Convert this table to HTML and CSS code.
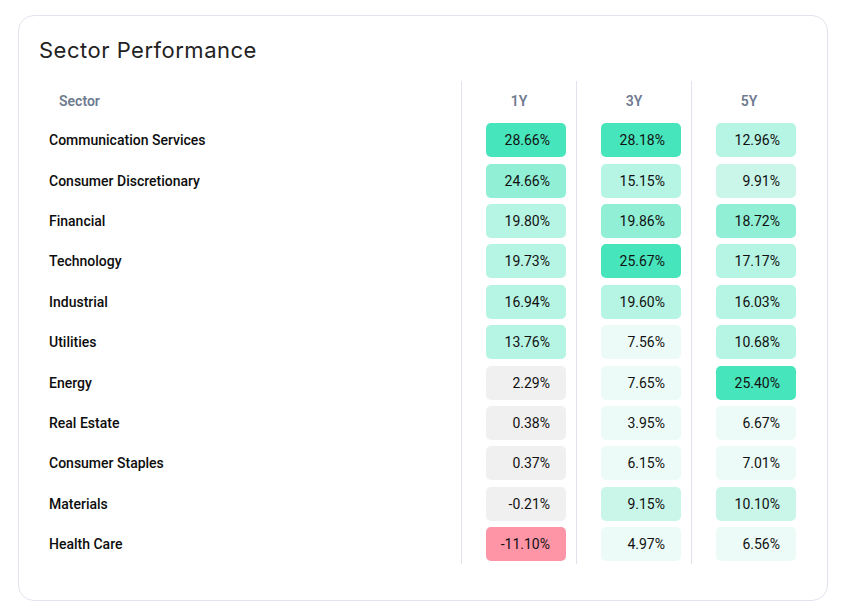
FILE: index.html
```html
<!DOCTYPE html>
<html lang="en">
<head>
<meta charset="utf-8">
<title>Sector Performance</title>
<link rel="stylesheet" href="styles.css">
</head>
<body>
<section class="card">
  <h2 class="title">Sector Performance</h2>
  <div class="grid">
    <div class="th th-sector">Sector</div>
    <div class="th num-col">1Y</div>
    <div class="th num-col">3Y</div>
    <div class="th num-col">5Y</div>

    <div class="name">Communication Services</div>
    <div class="num-col"><span class="pill a">28.66%</span></div>
    <div class="num-col"><span class="pill a">28.18%</span></div>
    <div class="num-col"><span class="pill c">12.96%</span></div>

    <div class="name">Consumer Discretionary</div>
    <div class="num-col"><span class="pill b">24.66%</span></div>
    <div class="num-col"><span class="pill c">15.15%</span></div>
    <div class="num-col"><span class="pill d">9.91%</span></div>

    <div class="name">Financial</div>
    <div class="num-col"><span class="pill c">19.80%</span></div>
    <div class="num-col"><span class="pill b">19.86%</span></div>
    <div class="num-col"><span class="pill b">18.72%</span></div>

    <div class="name">Technology</div>
    <div class="num-col"><span class="pill c">19.73%</span></div>
    <div class="num-col"><span class="pill a">25.67%</span></div>
    <div class="num-col"><span class="pill c">17.17%</span></div>

    <div class="name">Industrial</div>
    <div class="num-col"><span class="pill c">16.94%</span></div>
    <div class="num-col"><span class="pill c">19.60%</span></div>
    <div class="num-col"><span class="pill c">16.03%</span></div>

    <div class="name">Utilities</div>
    <div class="num-col"><span class="pill c">13.76%</span></div>
    <div class="num-col"><span class="pill e">7.56%</span></div>
    <div class="num-col"><span class="pill c">10.68%</span></div>

    <div class="name">Energy</div>
    <div class="num-col"><span class="pill g">2.29%</span></div>
    <div class="num-col"><span class="pill e">7.65%</span></div>
    <div class="num-col"><span class="pill a">25.40%</span></div>

    <div class="name">Real Estate</div>
    <div class="num-col"><span class="pill g">0.38%</span></div>
    <div class="num-col"><span class="pill e">3.95%</span></div>
    <div class="num-col"><span class="pill e">6.67%</span></div>

    <div class="name">Consumer Staples</div>
    <div class="num-col"><span class="pill g">0.37%</span></div>
    <div class="num-col"><span class="pill e">6.15%</span></div>
    <div class="num-col"><span class="pill e">7.01%</span></div>

    <div class="name">Materials</div>
    <div class="num-col"><span class="pill g">-0.21%</span></div>
    <div class="num-col"><span class="pill d">9.15%</span></div>
    <div class="num-col"><span class="pill d">10.10%</span></div>

    <div class="name">Health Care</div>
    <div class="num-col"><span class="pill r">-11.10%</span></div>
    <div class="num-col"><span class="pill e">4.97%</span></div>
    <div class="num-col"><span class="pill e">6.56%</span></div>
  </div>
</section>
</body>
</html>
```

FILE: styles.css
```css
* { box-sizing: border-box; }

html, body {
  margin: 0;
  background: #ffffff;
}

body {
  padding: 15px 0 0 18px;
  font-family: Roboto, "Liberation Sans", Arial, sans-serif;
  color: #111111;
}

.card {
  width: 810px;
  height: 586px;
  border: 1px solid #e3e3ee;
  border-radius: 16px;
  padding: 20px 20px 36px 20px;
  background: #ffffff;
}

.title {
  margin: 0 0 17px 0;
  font-family: Inter, "Open Sans", sans-serif;
  font-weight: 400;
  font-size: 22px;
  line-height: 28px;
  letter-spacing: 0.5px;
  color: #222222;
}

.grid {
  display: grid;
  grid-template-columns: 422px 115px 115px 115px;
  grid-template-rows: 39px repeat(11, 40.4px);
  align-items: center;
  width: 767px;
}

.th {
  height: 100%;
  display: flex;
  align-items: center;
  font-size: 14px;
  font-weight: 600;
  color: #6f7b90;
}

.th-sector {
  padding-left: 20px;
}

.th.num-col {
  justify-content: center;
}

.num-col {
  height: 100%;
  border-left: 1px solid #e2e2ef;
  display: flex;
  align-items: center;
}

.name {
  padding-left: 10px;
  font-size: 14px;
  font-weight: 500;
  color: #0d0d0d;
}

.pill {
  margin-left: 24px;
  width: 80px;
  height: 34px;
  border-radius: 5px;
  display: flex;
  align-items: center;
  justify-content: flex-end;
  padding-right: 16px;
  font-size: 14px;
  font-weight: 400;
  color: #111111;
}

.a { background: #47e5bc; }
.b { background: #90efd5; }
.c { background: #b6f4e3; }
.d { background: #c9f6e9; }
.e { background: #ecfbf7; }
.g { background: #f0f0f0; }
.r { background: #fe95a7; }
```
